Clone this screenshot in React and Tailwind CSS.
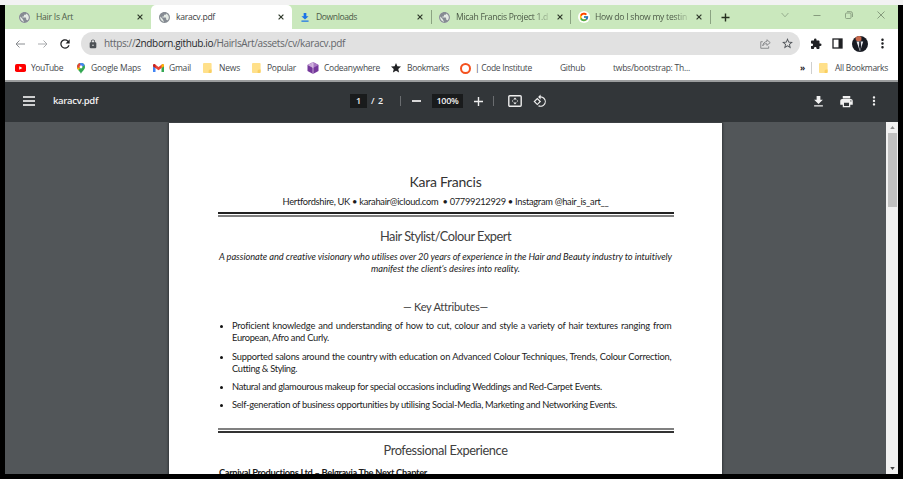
import React, { useLayoutEffect, useRef, useState } from "react";
import { FcGoogle } from "react-icons/fc";
import {
  MdPublic,
  MdExtension,
  MdPrint,
  MdDownload,
  MdRotate90DegreesCcw,
  MdLock,
  MdStar,
  MdStarBorder,
  MdMoreVert,
  MdRefresh,
} from "react-icons/md";

/* Single line of text whose tracking is adjusted to fill a given width. */
function Fit({ w, className = "", children }) {
  const ref = useRef(null);
  const [tracking, setTracking] = useState(0);
  useLayoutEffect(() => {
    const el = ref.current;
    const n = el.textContent.length;
    const measure = () => {
      const current = parseFloat(el.style.letterSpacing) || 0;
      const natural = el.getBoundingClientRect().width - current * n;
      setTracking((w - natural) / n);
    };
    measure();
    document.fonts?.ready.then(measure);
  }, [w]);
  return (
    <span
      ref={ref}
      className={`inline-block shrink-0 whitespace-pre ${className}`}
      style={{ letterSpacing: `${tracking}px` }}
    >
      {children}
    </span>
  );
}

const Close = ({ className = "" }) => (
  <svg viewBox="0 0 6 6" className={`h-[6px] w-[6px] shrink-0 ${className}`} fill="none" stroke="#303a2c" strokeWidth="1.2">
    <path d="M.6.6l4.8 4.8M5.4.6L.6 5.4" />
  </svg>
);

const Globe = ({ className = "" }) => (
  <span className={`flex h-[11px] w-[11px] shrink-0 items-center justify-center rounded-full bg-[#e4eae4] ${className}`}>
    <MdPublic className="h-[13px] w-[13px] shrink-0 text-[#868b93]" />
  </span>
);

const Folder = ({ className = "" }) => (
  <svg viewBox="0 0 9 10" className={`h-[10px] w-[9px] shrink-0 ${className}`}>
    <path d="M.5 0H8l.6.8V9.200L8 10H.5L0 9.300V.7z" fill="#ffe08a" />
    <path d="M5.600 10V7.500l1.200-1h1.800v2.700L8 10z" fill="#f9cf62" />
  </svg>
);

const TabRule = () => <div className="h-[14px] w-px shrink-0 bg-[#8ba382]" />;

function TabStrip() {
  return (
    <div className="flex h-6 items-center bg-[#cae8bd] text-[8.6px] text-[#4d5a48]">
      <div className="flex h-full w-[146px] shrink-0 items-center pl-[14px]">
        <Globe />
        <Fit w={37} className="ml-[6px]">Hair Is Art</Fit>
        <Close className="ml-auto mr-[8px]" />
      </div>
      <div className="flex h-full w-[141px] shrink-0 items-center rounded-t-[5px] bg-white pl-[8px] text-[#3c4043]">
        <Globe />
        <Fit w={39} className="ml-[6px]">karacv.pdf</Fit>
        <Close className="ml-auto mr-[8px]" />
      </div>
      <div className="flex h-full w-[139px] shrink-0 items-center pl-[9px]">
        <svg viewBox="0 0 9 10" className="h-[9px] w-[8px] shrink-0" fill="#1a73e8">
          <path d="M3 0h3v3.500h2.500L4.500 7.300.5 3.500H3zM.5 8.300h8v1.400h-8z" />
        </svg>
        <Fit w={41} className="ml-[7px]">Downloads</Fit>
        <Close className="ml-auto mr-[8px]" />
      </div>
      <TabRule />
      <div className="flex h-full w-[138px] shrink-0 items-center pl-[7px]">
        <Globe />
        <div className="ml-[6px] w-[92px] overflow-hidden [mask-image:linear-gradient(90deg,#000_85%,rgba(0,0,0,0.25))]">
          <Fit w={92}>Micah Francis Project 1.d</Fit>
        </div>
        <Close className="ml-auto mr-[7px]" />
      </div>
      <TabRule />
      <div className="flex h-full w-[139px] shrink-0 items-center pl-[7px]">
        <span className="flex h-[12px] w-[12px] shrink-0 items-center justify-center rounded-full bg-white">
          <FcGoogle size={10} />
        </span>
        <div className="ml-[5px] w-[92px] overflow-hidden [mask-image:linear-gradient(90deg,#000_85%,rgba(0,0,0,0.25))]">
          <Fit w={92}>How do I show my testin</Fit>
        </div>
        <Close className="ml-auto mr-[8px]" />
      </div>
      <TabRule />
      <svg viewBox="0 0 9 9" className="ml-[10px] h-[9px] w-[9px] shrink-0" stroke="#26301f" strokeWidth="1.400">
        <path d="M4.500 .5v8M.5 4.500h8" />
      </svg>
      <div className="mb-[4px] ml-auto mr-[13px] flex items-center gap-[24px]">
        <svg viewBox="0 0 8 8" className="h-2 w-2" fill="none" stroke="#91a789" strokeWidth=".9"><path d="M.6 2L4 5.800 7.400 2" /></svg>
        <svg viewBox="0 0 8 8" className="h-2 w-2" fill="none" stroke="#7e9276" strokeWidth=".9"><path d="M.5 4.500h7" /></svg>
        <svg viewBox="0 0 8 8" className="h-2 w-2" fill="none" stroke="#7e9276" strokeWidth=".8"><rect x=".5" y="2" width="5.500" height="5.500" rx="1" /><path d="M2 .6h3.500q2 0 2 2V6" /></svg>
        <svg viewBox="0 0 8 8" className="h-2 w-2" fill="none" stroke="#7e9276" strokeWidth=".9"><path d="M.5 .5l7 7M7.500 .5l-7 7" /></svg>
      </div>
    </div>
  );
}

function AddressBar() {
  return (
    <div className="flex h-[29px] items-center pl-[10px] text-[#202124]">
      <svg viewBox="0 0 10 8" className="h-[8px] w-[10px]" fill="none" stroke="#8a8d91" strokeWidth="1"><path d="M10 4H1M4.500 .5L1 4l3.500 3.500" /></svg>
      <svg viewBox="0 0 10 8" className="ml-[13px] h-[8px] w-[10px]" fill="none" stroke="#a9abae" strokeWidth="1"><path d="M0 4h9M5.500 .5L9 4 5.500 7.500" /></svg>
      <MdRefresh className="ml-[10px] h-[14px] w-[14px]" />
      <div className="ml-[9px] flex h-[23px] w-[719px] items-center rounded-full bg-[#e1e1e1] pl-[7px]">
        <MdLock className="h-[10px] w-[10px] text-[#4d5156]" />
        <Fit w={241} className="ml-[6px] text-[10px] text-[#63666a]">
          https://<span className="text-[#26282b]">2ndborn.github.io</span>/HairIsArt/assets/cv/karacv.pdf
        </Fit>
        <svg viewBox="0 0 12 11" className="ml-auto h-[10px] w-[11px]" fill="none" stroke="#77797c" strokeWidth=".9">
          <path d="M3 3H.8v7.200h8.700V8M7.500 .8L11.200 4 7.500 7V5.200C5 5 3.800 5.800 3 7.500 3.200 4.800 4.800 3 7.500 2.800z" />
        </svg>
        <MdStarBorder className="ml-[10px] mr-[6px] h-[13px] w-[13px] text-[#4d5156]" />
      </div>
      <MdExtension className="ml-[10px] h-[12px] w-[12px]" />
      <svg viewBox="0 0 11 11" className="ml-[10px] h-[11px] w-[11px]"><rect x="1" y="1" width="9" height="9" fill="none" stroke="#202124" strokeWidth="1.300" /><path d="M6.500 1H10v9H6.500z" fill="#202124" /></svg>
      <svg viewBox="0 0 16 16" className="ml-[9px] h-[16px] w-[16px]">
        <circle cx="8" cy="8" r="8" fill="#171a22" />
        <path d="M4.500 5.500l3.500 10L11.200 5.500z" fill="#e3e6ec" />
        <path d="M7.200 5.500L7 10.500l1.300 5 .8-5-.3-5z" fill="#22252f" />
        <path d="M3.500 1.400Q8-1.500 9.500 1.500L9.300 4.600Q6 6 3.800 4.200z" fill="#c8684b" />
      </svg>
      <MdMoreVert className="ml-[7px] h-[15px] w-[15px]" />
    </div>
  );
}

function BookmarksBar() {
  return (
    <div className="flex h-[22px] items-center pb-[2px] pl-[10px] text-[8.500px] text-[#45484c]">
      <svg viewBox="0 0 11 8" className="h-[8px] w-[11px]"><rect width="11" height="8" rx="1.800" fill="#f00" /><path d="M4.200 2.200v3.600L7.400 4z" fill="#fff" /></svg>
      <Fit w={32} className="ml-[5px]">YouTube</Fit>
      <svg viewBox="0 0 8 11" className="ml-[14px] h-[11px] w-[8px]">
        <path d="M4 11C3.500 8.500 0 7 0 4a4 4 0 0 1 8 0c0 3-3.500 4.500-4 7z" fill="#34a853" />
        <path d="M.4 2.300A4 4 0 0 1 5.500.3L1.300 6.500A4 4 0 0 1 .4 2.300z" fill="#ea4335" />
        <path d="M2.800 .2A4 4 0 0 1 7.700 2.600L4 4z" fill="#4285f4" />
        <path d="M.1 4.500L3 5l-1.500 2.300Q.3 6 .1 4.500z" fill="#fbbc04" />
        <circle cx="4" cy="4" r="1.400" fill="#fff" />
      </svg>
      <Fit w={50} className="ml-[6px]">Google Maps</Fit>
      <svg viewBox="0 0 11 8" className="ml-[12px] h-[8px] w-[11px]">
        <path d="M0 1v7h2.500V2z" fill="#4285f4" /><path d="M8.500 2v6H11V1z" fill="#34a853" />
        <path d="M0 1.200Q.8-.7 2.500.7l3 2.300 3-2.300Q10.200-.7 11 1.200v1L5.500 6.300 0 2.200z" fill="#ea4335" />
        <path d="M8.500.7Q10.200-.7 11 1.200v1L8.500 4z" fill="#fbbc04" />
        <path d="M0 1.200Q.8-.7 2.500.7V4L0 2.200z" fill="#c5221f" />
      </svg>
      <Fit w={22} className="ml-[5px]">Gmail</Fit>
      <Folder className="ml-[12px]" />
      <Fit w={21} className="ml-[7px]">News</Fit>
      <Folder className="ml-[12px]" />
      <Fit w={29} className="ml-[6px]">Popular</Fit>
      <svg viewBox="0 0 12 12" className="ml-[11px] h-[12px] w-[12px]">
        <path d="M6 0l5.500 3v6L6 12 .5 9V3z" fill="#75389b" />
        <path d="M6 0v6L.5 3z" fill="#c9a8d9" /><path d="M6 0v6L11.500 3z" fill="#a877c2" /><path d="M6 0V12" stroke="#e6d6ee" strokeWidth=".7" />
      </svg>
      <Fit w={56} className="ml-[5px]">Codeanywhere</Fit>
      <MdStar className="ml-[10px] h-[12px] w-[12px] text-[#202124]" />
      <Fit w={42} className="ml-[5px]">Bookmarks</Fit>
      <div className="ml-[11px] h-[11px] w-[11px] shrink-0 rounded-full border-[2.500px] border-[#f4511e]" />
      <Fit w={57} className="ml-[4px]">| Code Institute</Fit>
      <Fit w={25} className="ml-[28px]">Github</Fit>
      <Fit w={77} className="ml-[28px]">twbs/bootstrap: Th...</Fit>
      <Fit w={5} className="ml-auto text-[8.500px] font-bold text-[#202124]">»</Fit>
      <div className="ml-[6px] h-[12px] w-px bg-[#cfcfcf]" />
      <Folder className="ml-[7px]" />
      <Fit w={53} className="ml-[7px] mr-[10px]">All Bookmarks</Fit>
    </div>
  );
}

function PdfToolbar() {
  return (
    <div className="flex h-10 shrink-0 items-center bg-[#323639] pb-[2px] text-[9px] font-semibold text-[#f1f1f1]">
      <div className="ml-[18px] flex h-[10px] w-[12px] shrink-0 flex-col justify-between">
        <div className="h-[2px] bg-[#cfd0d1]" />
        <div className="h-[2px] bg-[#cfd0d1]" />
        <div className="h-[2px] bg-[#cfd0d1]" />
      </div>
      <Fit w={45} className="ml-[18px] text-[9.500px]">karacv.pdf</Fit>
      <div className="ml-[252px] flex h-[14px] w-[17px] shrink-0 items-center justify-center bg-[#191b1c]">1</div>
      <span className="ml-[4px] w-[7px] shrink-0">/</span>
      <span className="w-[6px] shrink-0">2</span>
      <div className="ml-[16px] h-[10px] w-px shrink-0 bg-[#6a6d70]" />
      <div className="ml-[11px] h-[2px] w-[9px] shrink-0 bg-[#d8d8d8]" />
      <div className="ml-[11px] flex h-[14px] w-[31px] shrink-0 items-center justify-center bg-[#191b1c]"><Fit w={22}>100%</Fit></div>
      <svg viewBox="0 0 9 9" className="ml-[11px] h-[9px] w-[9px] shrink-0" stroke="#eee" strokeWidth="1.400"><path d="M4.500 0v9M0 4.500h9" /></svg>
      <div className="ml-[10px] h-[10px] w-px shrink-0 bg-[#6a6d70]" />
      <svg viewBox="0 0 14 12" className="ml-[14px] h-[12px] w-[14px] shrink-0"><rect x=".8" y=".8" width="12.400" height="10.400" rx="1" fill="none" stroke="#eee" strokeWidth="1.400" /><path d="M7 2.400l1.800 2.200H5.200zM7 9.600l1.800-2.200H5.200zM4 5.500h1.100v1H4zM8.900 5.500H10v1H8.900z" fill="#eee" /></svg>
      <MdRotate90DegreesCcw className="ml-[11px] h-[14px] w-[14px] shrink-0" />
      <MdDownload className="ml-auto h-[15px] w-[15px] shrink-0" />
      <MdPrint className="ml-[13px] h-[15px] w-[15px] shrink-0" />
      <MdMoreVert className="ml-[13px] mr-[17px] h-[14px] w-[14px] shrink-0" />
    </div>
  );
}

const attributes = [
  { h: "h-[31px]", first: "Proficient knowledge and understanding of how to cut, colour and style a variety of hair textures ranging from", last: "European, Afro and Curly.", w: 97 },
  { h: "h-[30px]", first: "Supported salons around the country with education on Advanced Colour Techniques, Trends, Colour Correction,", last: "Cutting & Styling.", w: 65 },
  { h: "h-[18px]", last: "Natural and glamourous makeup for special occasions including Weddings and Red-Carpet Events.", w: 370 },
  { h: "h-[18px]", last: "Self-generation of business opportunities by utilising Social-Media, Marketing and Networking Events.", w: 385 },
];

function Page() {
  return (
    <div className="ml-[164px] mt-px flex w-[553px] shrink-0 flex-col items-center bg-white px-[49px] pt-[50px] font-['Lato',sans-serif] text-[9.300px] leading-[12px] text-[#1c1c1c] shadow-[0_0_2px_1px_#33373a]">
      <div className="flex h-[18px] items-center text-[14px] text-[#333]"><Fit w={72}>Kara Francis</Fit></div>
      <div className="mt-[5px] flex h-[12px] items-center"><Fit w={326}>Hertfordshire, UK • karahair@icloud.com  • 07799212929 • Instagram @hair_is_art__</Fit></div>
      <div className="mt-[4px] h-[5px] w-[456px] shrink-0 border-y-2 border-b-[#808080] border-t-[#222]" />
      <div className="mt-[10px] flex h-[18px] items-center text-[12.800px] text-[#404040]"><Fit w={131}>Hair Stylist/Colour Expert</Fit></div>
      <div className="mt-[6px] flex h-[12px] items-center italic"><Fit w={453}>A passionate and creative visionary who utilises over 20 years of experience in the Hair and Beauty industry to intuitively</Fit></div>
      <div className="flex h-[12px] items-center italic"><Fit w={149}>manifest the client’s desires into reality.</Fit></div>
      <div className="mt-[24px] flex h-[15px] items-center text-[11px] text-[#404040]"><Fit w={85}>— Key Attributes—</Fit></div>
      <ul className="mt-[6px] w-[456px] pr-[2px]">
        {attributes.map((a) => (
          <li key={a.last} className={`flex pl-[2px] ${a.h}`}>
            <span className="mt-[5px] h-[3px] w-[3px] shrink-0 rounded-full bg-[#111]" />
            <div className="ml-[9.500px] flex grow flex-col">
              {a.first && <div className="h-[12px] whitespace-nowrap tracking-[-0.200px] [text-align-last:justify]">{a.first}</div>}
              <Fit w={a.w} className="self-start">{a.last}</Fit>
            </div>
          </li>
        ))}
      </ul>
      <div className="mt-[11px] h-[5px] w-[456px] shrink-0 border-y-2 border-b-[#333] border-t-[#808080]" />
      <div className="mt-[8px] flex h-[18px] items-center text-[12.800px] text-[#404040]"><Fit w={124}>Professional Experience</Fit></div>
      <div className="mt-[8px] flex h-[12px] items-center self-start font-bold"><Fit w={208} className="ml-px">Carnival Productions Ltd – Belgravia The Next Chapter</Fit></div>
    </div>
  );
}

export default function App() {
  return (
    <div className="flex h-[479px] w-[903px] flex-col overflow-hidden bg-black font-['Open_Sans','Noto_Sans',sans-serif]">
      <div className="h-[5px] shrink-0 bg-[#f2f2f2]" />
      <div className="mx-[5px] flex h-[469px] flex-col overflow-hidden bg-white">
        <TabStrip />
        <AddressBar />
        <BookmarksBar />
        <div className="h-[2px] shrink-0 bg-[#9b9d9e]" />
        <PdfToolbar />
        <div className="flex h-[352px] shrink-0 items-start overflow-hidden bg-[#525659]">
          <Page />
          <div className="ml-auto flex h-[352px] w-[12px] shrink-0 flex-col items-center bg-[#f1f1f1]">
            <svg viewBox="0 0 6 4" className="mt-[4px] h-[3px] w-[5px] shrink-0" fill="#8d8d8d"><path d="M3 0l3 4H0z" /></svg>
            <div className="mt-[4px] h-[74px] w-[9px] shrink-0 bg-[#c1c1c1]" />
            <svg viewBox="0 0 6 4" className="mb-[4px] mt-auto h-[3px] w-[5px] shrink-0" fill="#444"><path d="M0 0h6L3 4z" /></svg>
          </div>
        </div>
      </div>
    </div>
  );
}
